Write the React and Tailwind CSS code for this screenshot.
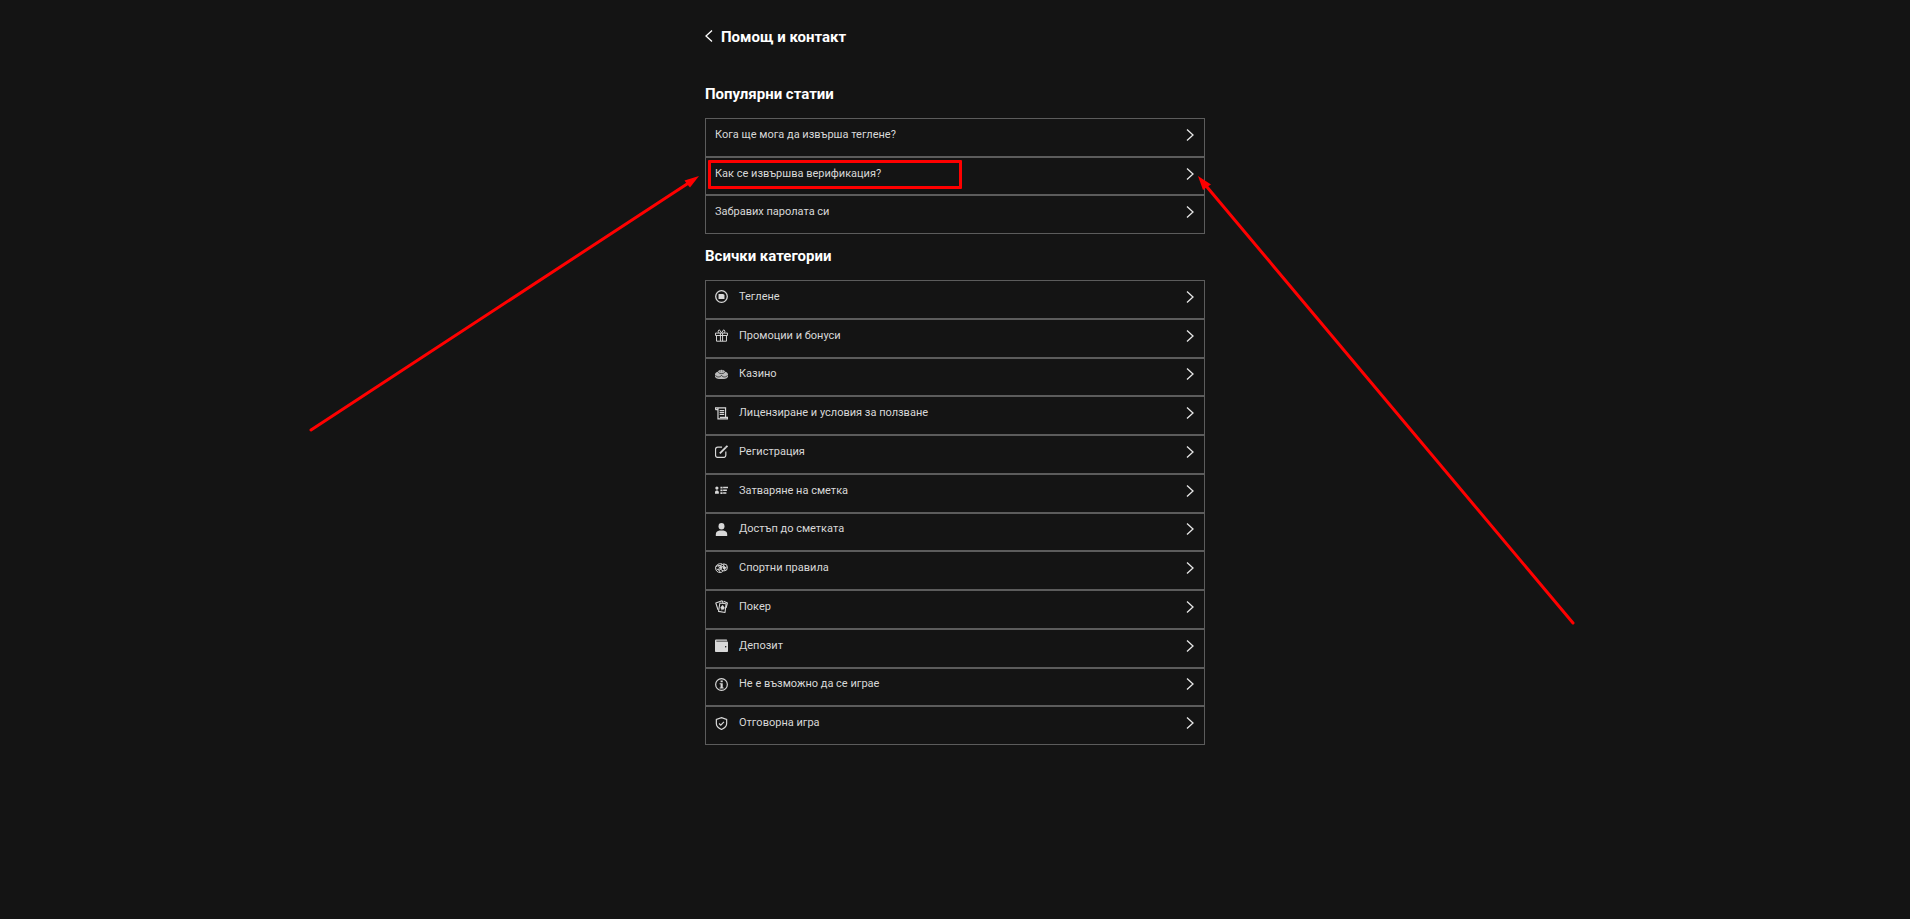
import React from "react";

const POPULAR = [
  { label: "Кога ще мога да извърша теглене?" },
  { label: "Как се извършва верификация?", highlighted: true },
  { label: "Забравих паролата си" },
];

const CATEGORIES = [
  { label: "Теглене", icon: "withdraw" },
  { label: "Промоции и бонуси", icon: "gift" },
  { label: "Казино", icon: "casino" },
  { label: "Лицензиране и условия за ползване", icon: "license" },
  { label: "Регистрация", icon: "register" },
  { label: "Затваряне на сметка", icon: "close" },
  { label: "Достъп до сметката", icon: "user" },
  { label: "Спортни правила", icon: "sports" },
  { label: "Покер", icon: "poker" },
  { label: "Депозит", icon: "wallet" },
  { label: "Не е възможно да се играе", icon: "info" },
  { label: "Отговорна игра", icon: "shield" },
];

// All category icons are drawn on a 24x24 grid
const ICONS = {
  withdraw: (
    <>
      <circle cx="12" cy="12" r="10.7" fill="none" stroke="currentColor" strokeWidth="2.4" />
      <path fill="currentColor" d="M6.5 7.5h9.5v1.2h1.5v8h-11z" />
    </>
  ),
  gift: (
    <g fill="none" stroke="currentColor" strokeWidth="1.8">
      <path d="M1 7.500h22v4.500H1zM2.800 12v10.500h18.400V12M10 7.500v15M14 7.500v15" />
      <path d="M12 7L8 1.500 5.500 4 7 7M12 7l4-5.500L18.500 4 17 7" />
    </g>
  ),
  casino: (
    <>
      <path
        fill="currentColor"
        fillOpacity="0.85"
        d="M12 3c3.500 0 6 1.500 6.500 4 3 .5 5.500 2.500 5.500 5v3c0 3.500-5 5.500-12 5.500S0 18.500 0 15v-3c0-2.500 2.500-4.500 5.500-5C6 4.500 8.500 3 12 3z"
      />
      <path
        fill="none"
        stroke="#141414"
        strokeWidth="1.300"
        d="M6 8c1 3 11 3 12 0M1 13.500c2 4 9 4 11 0 2 4 9 4 11 0M9 5.500h1.500M13.500 5.500H15"
      />
    </>
  ),
  license: (
    <g fill="none" stroke="currentColor" strokeWidth="2.200">
      <path d="M1 5V1.500h18.500V19M1 5h4M5.500 1.500V22h17.500v-3H9" />
      <path d="M8.500 6.500h8.500M8.500 10h8.500M8.500 13.500h8.500" />
    </g>
  ),
  register: (
    <g fill="none" stroke="currentColor">
      <path strokeWidth="2.200" d="M13 4H5a4 4 0 0 0-4 4v11a4 4 0 0 0 4 4h11a4 4 0 0 0 4-4v-7" />
      <path strokeWidth="3.500" d="M9 15.500L20 4.500" />
      <path strokeWidth="3.500" d="M20 4.500l3-3" />
    </g>
  ),
  close: (
    <g fill="currentColor">
      <circle cx="3.500" cy="7.500" r="3" />
      <path d="M0 18v-3c0-2 1.500-3 3.500-3S7 13 7 15v3z" />
      <path d="M10 5h4v3.500h-4zM10 10h4v3.500h-4zM10 15h4v3.500h-4zM15 5h9v3h-9zM15 10h7v3h-7zM15 15h6v3h-6z" />
    </g>
  ),
  user: (
    <g fill="currentColor">
      <ellipse cx="12" cy="6" rx="5.500" ry="6" />
      <path d="M1.500 24v-3c0-4 2.500-6 7-7h7c4.500 1 7 3 7 7v3z" />
    </g>
  ),
  sports: (
    <g fill="none" stroke="currentColor" strokeWidth="1.800">
      <circle cx="16.500" cy="10" r="6.500" />
      <path d="M13 3.500C7 2 1 5.500 1 11c0 5 4 8.500 8.500 8.500 2 0 4-1 5.500-3" />
      <path d="M2 9l4-3 5 1 1 5-4 3-5-2M6 6l2 4 4 1M8 10l-1 5 3 4M16.500 4l-1 4-5 2M19 16l-2-4 5-3" />
      <path fill="currentColor" d="M15 9l2.500-1 2 2-1 2.500h-3z" />
    </g>
  ),
  poker: (
    <g stroke="currentColor" strokeWidth="2" fill="none" strokeLinejoin="round">
      <path d="M9 5.500l11.500 1.500-2 16L6.500 21z" fill="#141414" />
      <path d="M5.500 18L1.500 5.500 13 1.500l2 4M16 2.500l7 3-2.500 9" />
      <path fill="currentColor" strokeWidth="1" d="M14 9.500l3.500 5-1.500 2.500h-4l-1.500-3zM13 16l-.5 3.500" />
    </g>
  ),
  wallet: (
    <>
      <path fill="currentColor" d="M0 3.500C0 2 1 1 2.500 1H21c1 0 1.500.7 1.500 2H2.500v1.500H22c1.200 0 2 .8 2 2V22c0 1-.8 2-2 2H2c-1.200 0-2-1-2-2z" />
      <rect x="18.500" y="13" width="2.500" height="2.500" rx="1" fill="#141414" />
    </>
  ),
  info: (
    <>
      <circle cx="12" cy="12" r="10.800" fill="none" stroke="currentColor" strokeWidth="2.200" />
      <path fill="currentColor" d="M10.300 4.500h4v3.500h-4zM8.500 9.500h5.800v8h1.700v2H8.500v-2h1.800v-6H8.500z" />
    </>
  ),
  shield: (
    <g fill="none" stroke="currentColor" strokeWidth="2.200">
      <path d="M12 1.200l9.500 3.300v8c0 5-4 8-9.500 10.500C6.500 20.500 2.500 17.500 2.500 12.500v-8z" />
      <path d="M7.500 12l3.200 3 5.800-6" />
    </g>
  ),
};

const Chevron = ({ className }) => (
  <svg
    viewBox="0 0 8 12"
    className={`h-3 w-2 shrink-0 ${className}`}
    fill="none"
    stroke="currentColor"
    strokeWidth="1.300"
    aria-hidden="true"
  >
    <path d="M1 0.500L7 6L1 11.500" />
  </svg>
);

const Row = ({ label, icon, highlighted }) => (
  <li className="flex flex-1">
    <a
      href="#"
      className="relative flex flex-1 items-center border border-[#5c5c5c] pr-[10px] pb-[5px] pl-[9px] hover:bg-white/5"
    >
      {icon && (
        <svg viewBox="0 0 24 24" className="mr-[11px] h-[13px] w-[13px] shrink-0" aria-hidden="true">
          {ICONS[icon]}
        </svg>
      )}
      <span className="flex-1">{label}</span>
      <Chevron className="text-[#e6e6e6]" />
      {highlighted && (
        <span className="pointer-events-none absolute top-[2px] left-[2px] h-[29px] w-[254px] rounded-[1px] border-3 border-[#ff0000]" />
      )}
    </a>
  </li>
);

// Red pointers leading to both ends of the highlighted article
const Pointers = () => (
  <svg
    viewBox="0 0 1300 919"
    className="pointer-events-none absolute top-0 left-1/2 h-[919px] w-[1300px] -translate-x-1/2"
    stroke="#ff0000"
    fill="#ff0000"
    aria-hidden="true"
  >
    <g strokeWidth="3" strokeLinecap="round">
      <path d="M6 430L382 184" />
      <path d="M1268 623L902 187" />
    </g>
    <g stroke="none">
      <path d="M394 176L379.500 180.500L382 184L385 187.500Z" />
      <path d="M893 176L906 184.500L902 187L898 190Z" />
    </g>
  </svg>
);

export default function App() {
  return (
    <div className="relative min-h-screen overflow-hidden bg-[#141414] font-['Roboto',sans-serif] text-[#d8d8d8]">
      <main className="mx-auto max-w-[500px] pt-[27px]">
        <header className="flex items-center">
          <button type="button" aria-label="Назад" className="mr-2 pb-0.5 text-white">
            <Chevron className="rotate-180" />
          </button>
          <h1 className="text-[15px] leading-5 font-bold text-white">Помощ и контакт</h1>
        </header>

        <section className="mt-[35px]">
          <h2 className="text-[15px] leading-6 font-bold text-white">Популярни статии</h2>
          <ul className="mt-3 flex min-h-[116px] flex-col text-[11px] leading-4">
            {POPULAR.map((item) => (
              <Row key={item.label} {...item} />
            ))}
          </ul>
        </section>

        <section className="mt-[10px]">
          <h2 className="text-[15px] leading-6 font-bold text-white">Всички категории</h2>
          <ul className="mt-3 flex min-h-[465px] flex-col text-[11px] leading-4">
            {CATEGORIES.map((item) => (
              <Row key={item.label} {...item} />
            ))}
          </ul>
        </section>
      </main>

      <Pointers />
    </div>
  );
}
